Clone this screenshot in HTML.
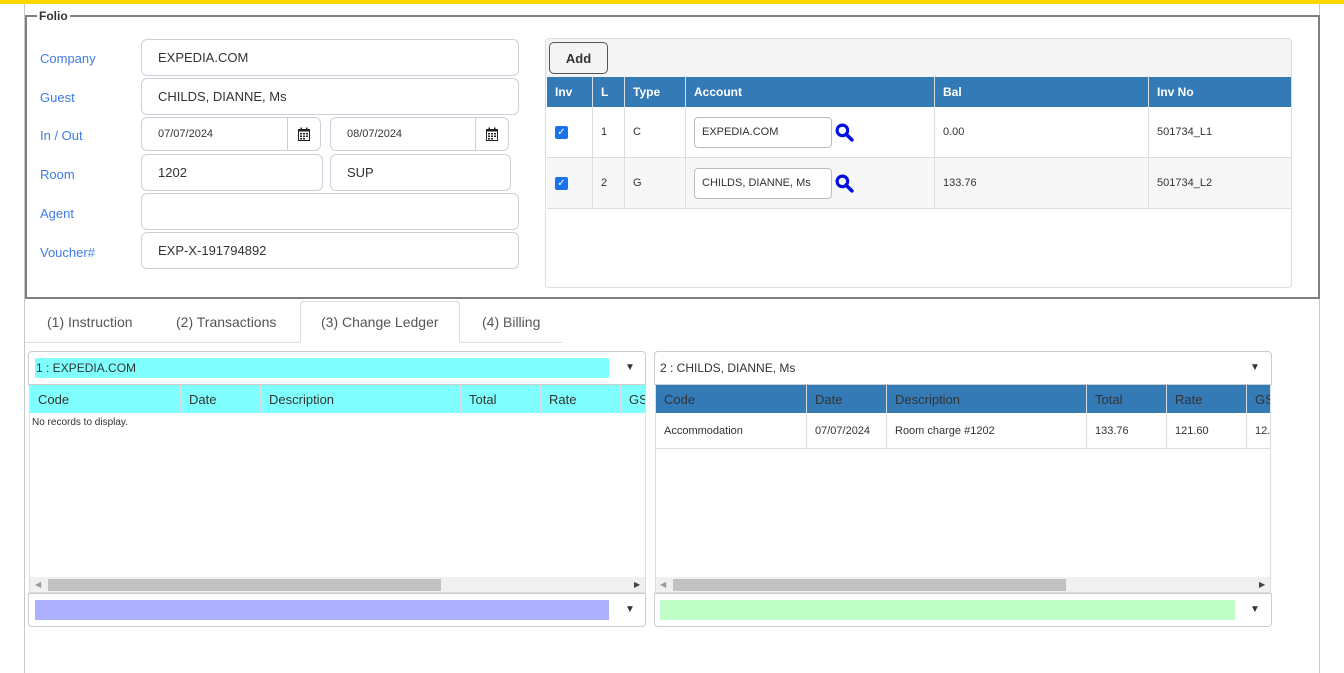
<!DOCTYPE html>
<html><head><meta charset="utf-8"><style>
*{box-sizing:border-box;margin:0;padding:0}
body{width:1344px;height:673px;background:#fff;font-family:"Liberation Sans",Arial,sans-serif;position:relative;overflow:hidden;color:#333}
.a{position:absolute}
.lbl{position:absolute;left:40px;color:#3f7be6;font-size:13px}
.inp{position:absolute;border:1px solid #cdd0da;border-radius:6px;background:#fff;font-size:13px;color:#333;padding-left:16px;display:flex;align-items:center}
.cal{position:absolute;border:1px solid #cdd0da;border-radius:0 6px 6px 0;background:#fff;display:flex;align-items:center;justify-content:center}
.th{position:absolute;top:0;height:100%;display:flex;align-items:center;padding-left:8px;border-right:1px solid #dcdcdc}
.cell{position:absolute;display:flex;align-items:center;padding-left:8px;font-size:11px;border-right:1px solid #ddd;height:100%;top:0}
</style></head><body>
<div class="a" style="left:0;top:0;width:1344px;height:4px;background:#ffd700"></div>
<div class="a" style="left:24px;top:4px;width:1296px;height:669px;border-left:1px solid #c8c8c8;border-right:1px solid #c8c8c8"></div>
<div class="a" style="left:25px;top:15px;width:1295px;height:284px;border:2px solid #808080"></div>
<div class="a" style="left:37px;top:9px;background:#fff;padding:0 2px;font-size:12px;font-weight:bold;color:#333">Folio</div>

<div class="lbl" style="top:51px">Company</div>
<div class="lbl" style="top:90px">Guest</div>
<div class="lbl" style="top:128px">In / Out</div>
<div class="lbl" style="top:167px">Room</div>
<div class="lbl" style="top:206px">Agent</div>
<div class="lbl" style="top:245px">Voucher#</div>

<div class="inp" style="left:141px;top:39px;width:378px;height:37px">EXPEDIA.COM</div>
<div class="inp" style="left:141px;top:78px;width:378px;height:37px">CHILDS, DIANNE, Ms</div>
<div class="inp" style="left:141px;top:117px;width:147px;height:34px;border-radius:6px 0 0 6px;font-size:11px">07/07/2024</div>
<div class="cal" style="left:287px;top:117px;width:34px;height:34px"><svg width="12" height="14" viewBox="0 0 12 14"><rect x="0.5" y="2.5" width="11" height="11" fill="none" stroke="#222"/><rect x="0" y="2" width="12" height="2.5" fill="#222"/><rect x="2.5" y="0.5" width="1.5" height="3" fill="#222"/><rect x="8" y="0.5" width="1.5" height="3" fill="#222"/><g fill="#222"><rect x="2" y="6" width="2" height="1.5"/><rect x="5" y="6" width="2" height="1.5"/><rect x="8" y="6" width="2" height="1.5"/><rect x="2" y="8.5" width="2" height="1.5"/><rect x="5" y="8.5" width="2" height="1.5"/><rect x="8" y="8.5" width="2" height="1.5"/><rect x="2" y="11" width="2" height="1.5"/><rect x="5" y="11" width="2" height="1.5"/></g></svg></div>
<div class="inp" style="left:330px;top:117px;width:146px;height:34px;border-radius:6px 0 0 6px;font-size:11px">08/07/2024</div>
<div class="cal" style="left:475px;top:117px;width:34px;height:34px"><svg width="12" height="14" viewBox="0 0 12 14"><rect x="0.5" y="2.5" width="11" height="11" fill="none" stroke="#222"/><rect x="0" y="2" width="12" height="2.5" fill="#222"/><rect x="2.5" y="0.5" width="1.5" height="3" fill="#222"/><rect x="8" y="0.5" width="1.5" height="3" fill="#222"/><g fill="#222"><rect x="2" y="6" width="2" height="1.5"/><rect x="5" y="6" width="2" height="1.5"/><rect x="8" y="6" width="2" height="1.5"/><rect x="2" y="8.5" width="2" height="1.5"/><rect x="5" y="8.5" width="2" height="1.5"/><rect x="8" y="8.5" width="2" height="1.5"/><rect x="2" y="11" width="2" height="1.5"/><rect x="5" y="11" width="2" height="1.5"/></g></svg></div>
<div class="inp" style="left:141px;top:154px;width:182px;height:37px">1202</div>
<div class="inp" style="left:330px;top:154px;width:181px;height:37px">SUP</div>
<div class="inp" style="left:141px;top:193px;width:378px;height:37px"></div>
<div class="inp" style="left:141px;top:232px;width:378px;height:37px">EXP-X-191794892</div>

<div class="a" style="left:545px;top:38px;width:747px;height:250px;border:1px solid #ddd;border-radius:4px;overflow:hidden">
 <div class="a" style="left:0;top:0;width:100%;height:38px;background:#f4f4f4"></div>
 <div class="a" style="left:3px;top:3px;width:59px;height:32px;border:1px solid #555;border-radius:5px;background:#f4f4f4;font-size:13px;font-weight:bold;display:flex;align-items:center;justify-content:center;color:#333">Add</div>
 <div class="a" style="left:1px;top:38px;width:745px;height:30px;background:#337ab7;color:#fff;font-size:12px;font-weight:bold">
  <div class="th" style="left:0;width:46px">Inv</div>
  <div class="th" style="left:46px;width:32px">L</div>
  <div class="th" style="left:78px;width:61px">Type</div>
  <div class="th" style="left:139px;width:249px">Account</div>
  <div class="th" style="left:388px;width:214px">Bal</div>
  <div class="th" style="left:602px;width:143px;border:0">Inv No</div>
 </div>
 <div class="a" style="left:1px;top:68px;width:745px;height:51px;border-bottom:1px solid #ddd;background:#fff">
  <div class="cell" style="left:0;width:46px"><span style="width:13px;height:13px;background:#1a73e8;border-radius:2px;color:#fff;font-size:10px;display:flex;align-items:center;justify-content:center">✓</span></div>
  <div class="cell" style="left:46px;width:32px">1</div>
  <div class="cell" style="left:78px;width:61px">C</div>
  <div class="cell" style="left:139px;width:249px"><div style="width:138px;height:31px;border:1px solid #bbb;border-radius:4px;display:flex;align-items:center;padding-left:7px">EXPEDIA.COM</div><svg style="margin-left:3px" width="19" height="19" viewBox="0 0 18 18"><circle cx="7" cy="7" r="5" fill="none" stroke="#0010e0" stroke-width="3"/><line x1="10.5" y1="10.5" x2="16" y2="16" stroke="#0010e0" stroke-width="3.4" stroke-linecap="round"/></svg></div>
  <div class="cell" style="left:388px;width:214px">0.00</div>
  <div class="cell" style="left:602px;width:143px;border:0">501734_L1</div>
 </div>
 <div class="a" style="left:1px;top:119px;width:745px;height:51px;border-bottom:1px solid #ddd;background:#f7f7f7">
  <div class="cell" style="left:0;width:46px"><span style="width:13px;height:13px;background:#1a73e8;border-radius:2px;color:#fff;font-size:10px;display:flex;align-items:center;justify-content:center">✓</span></div>
  <div class="cell" style="left:46px;width:32px">2</div>
  <div class="cell" style="left:78px;width:61px">G</div>
  <div class="cell" style="left:139px;width:249px"><div style="width:138px;height:31px;border:1px solid #bbb;border-radius:4px;display:flex;align-items:center;padding-left:7px;background:#fff">CHILDS, DIANNE, Ms</div><svg style="margin-left:3px" width="19" height="19" viewBox="0 0 18 18"><circle cx="7" cy="7" r="5" fill="none" stroke="#0010e0" stroke-width="3"/><line x1="10.5" y1="10.5" x2="16" y2="16" stroke="#0010e0" stroke-width="3.4" stroke-linecap="round"/></svg></div>
  <div class="cell" style="left:388px;width:214px">133.76</div>
  <div class="cell" style="left:602px;width:143px;border:0">501734_L2</div>
 </div>
</div>

<div class="a" style="left:25px;top:342px;width:537px;height:1px;background:#ddd"></div>
<div class="a" style="left:300px;top:301px;width:160px;height:42px;border:1px solid #ddd;border-bottom:1px solid #fff;border-radius:4px 4px 0 0;background:#fff"></div>
<div class="a" style="left:47px;top:314px;font-size:14px;color:#555">(1) Instruction</div>
<div class="a" style="left:176px;top:314px;font-size:14px;color:#555">(2) Transactions</div>
<div class="a" style="left:321px;top:314px;font-size:14px;color:#555">(3) Change Ledger</div>
<div class="a" style="left:482px;top:314px;font-size:14px;color:#555">(4) Billing</div>

<div class="a" style="left:28px;top:351px;width:618px;height:34px;border:1px solid #ccc;border-radius:4px 4px 0 0"></div>
<div class="a" style="left:35px;top:358px;width:574px;height:20px;background:#80ffff;font-size:12px;padding-left:1px;line-height:20px">1 : EXPEDIA.COM</div>
<div class="a" style="left:625px;top:362px;font-size:10px">▼</div>
<div class="a" style="left:29px;top:385px;width:617px;height:208px;border:1px solid #ddd;border-top:0;overflow:hidden">
 <div class="a" style="left:0;top:0;width:640px;height:28px;background:#80ffff;font-size:13px;color:#333">
  <div class="th" style="left:0;width:151px">Code</div><div class="th" style="left:151px;width:80px">Date</div><div class="th" style="left:231px;width:200px">Description</div><div class="th" style="left:431px;width:80px">Total</div><div class="th" style="left:511px;width:80px">Rate</div><div class="th" style="left:591px;width:60px">GS</div>
 </div>
 <div class="a" style="left:2px;top:32px;font-size:10px">No records to display.</div>
 <div class="a" style="left:0;top:192px;width:617px;height:16px;background:#f0f0f0"></div>
 <div class="a" style="left:18px;top:194px;width:393px;height:12px;background:#c1c1c1"></div>
 <div class="a" style="left:5px;top:195px;font-size:8px;color:#999">◀</div>
 <div class="a" style="left:604px;top:195px;font-size:8px;color:#444">▶</div>
</div>
<div class="a" style="left:28px;top:593px;width:618px;height:34px;border:1px solid #ccc;border-radius:0 0 4px 4px"></div>
<div class="a" style="left:35px;top:600px;width:574px;height:20px;background:#adb0fc"></div>
<div class="a" style="left:625px;top:604px;font-size:10px">▼</div>

<div class="a" style="left:654px;top:351px;width:618px;height:34px;border:1px solid #ccc;border-radius:4px 4px 0 0"></div>
<div class="a" style="left:660px;top:358px;font-size:12px;line-height:20px">2 : CHILDS, DIANNE, Ms</div>
<div class="a" style="left:1250px;top:362px;font-size:10px">▼</div>
<div class="a" style="left:655px;top:385px;width:616px;height:208px;border:1px solid #ddd;border-top:0;overflow:hidden">
 <div class="a" style="left:0;top:0;width:640px;height:28px;background:#337ab7;font-size:13px;color:#333">
  <div class="th" style="left:0;width:151px">Code</div><div class="th" style="left:151px;width:80px">Date</div><div class="th" style="left:231px;width:200px">Description</div><div class="th" style="left:431px;width:80px">Total</div><div class="th" style="left:511px;width:80px">Rate</div><div class="th" style="left:591px;width:60px">GS</div>
 </div>
 <div class="a" style="left:0;top:28px;width:640px;height:36px;border-bottom:1px solid #ddd">
  <div class="cell" style="left:0;width:151px">Accommodation</div><div class="cell" style="left:151px;width:80px">07/07/2024</div><div class="cell" style="left:231px;width:200px">Room charge #1202</div><div class="cell" style="left:431px;width:80px">133.76</div><div class="cell" style="left:511px;width:80px">121.60</div><div class="cell" style="left:591px;width:60px">12.16</div>
 </div>
 <div class="a" style="left:0;top:192px;width:616px;height:16px;background:#f0f0f0"></div>
 <div class="a" style="left:17px;top:194px;width:393px;height:12px;background:#c1c1c1"></div>
 <div class="a" style="left:4px;top:195px;font-size:8px;color:#999">◀</div>
 <div class="a" style="left:603px;top:195px;font-size:8px;color:#444">▶</div>
</div>
<div class="a" style="left:654px;top:593px;width:618px;height:34px;border:1px solid #ccc;border-radius:0 0 4px 4px"></div>
<div class="a" style="left:660px;top:600px;width:575px;height:20px;background:#c0ffc8"></div>
<div class="a" style="left:1250px;top:604px;font-size:10px">▼</div>
</body></html>
